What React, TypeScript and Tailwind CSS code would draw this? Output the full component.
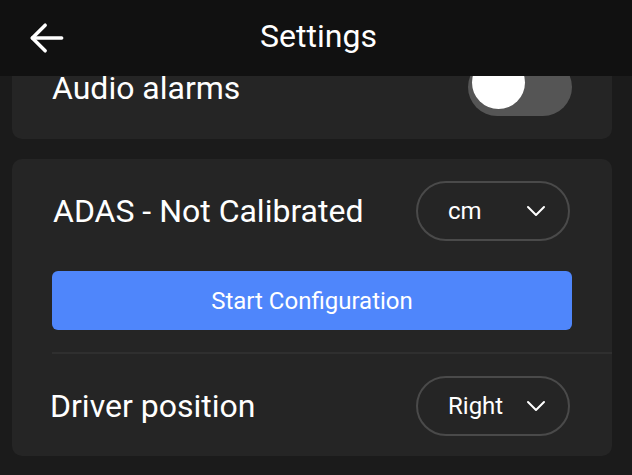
import React, { useState } from 'react';

function Chevron() {
  return (
    <svg width="24" height="24" viewBox="0 0 24 24" fill="none" stroke="white" strokeWidth="2" strokeLinecap="round" strokeLinejoin="round">
      <path d="M4 8l8 8 8-8" />
    </svg>
  );
}

function Select({ value }: { value: string }) {
  return (
    <button className="flex items-center justify-between w-[154px] h-[60px] rounded-full border-2 border-[#4a4a4a] pl-[30px] pr-[20px] text-[24px] text-white">
      <span>{value}</span>
      <Chevron />
    </button>
  );
}

export default function App() {
  const [audio, setAudio] = useState(false);

  return (
    <div className="flex flex-col w-[632px] h-[475px] overflow-hidden bg-[#1b1b1b] text-white" style={{ fontFamily: 'Roboto, "Noto Sans", sans-serif' }}>
      {/* Top bar */}
      <header className="relative z-10 flex items-center h-[76px] shrink-0 bg-[#111111] pl-[25px] pr-6">
        <svg width="44" height="44" viewBox="0 0 24 24" fill="none" stroke="white" strokeWidth="1.9" strokeLinecap="round" strokeLinejoin="round">
          <path d="M20 12H4" />
          <path d="M11 19l-7-7 7-7" />
        </svg>
        <h1 className="flex-1 text-center text-[32px] pr-[40px] pb-[4px]">Settings</h1>
      </header>

      <div className="flex flex-col gap-5 pl-3 pr-5">
        {/* Audio card, scrolled partly under the header */}
        <div className="-mt-[20px] bg-[#252525] rounded-[10px] pl-10 pr-10 pt-[2px] pb-[23px] flex items-center justify-between">
          <span className="text-[32px] pt-[2px]">Audio alarms</span>
          <button
            onClick={() => setAudio(!audio)}
            className="relative w-[104px] h-[58px] rounded-full bg-[#555555]"
          >
            <span className="absolute left-[4px] top-[-2px] w-[53px] h-[53px] rounded-full bg-white" />
          </button>
        </div>

        {/* ADAS card */}
        <div className="bg-[#252525] rounded-[10px] pt-[22px] pb-[20px]">
          <div className="flex items-center justify-between pl-10 pr-[42px]">
            <span className="text-[32px] pl-[1px]">ADAS - Not Calibrated</span>
            <Select value="cm" />
          </div>
          <div className="px-10 mt-[30px]">
            <button className="w-full h-[59px] rounded-[6px] bg-[#4f86fb] text-[24px]">Start Configuration</button>
          </div>
          <div className="ml-10 mt-[22px] h-[2px] bg-[#2f2f2f]" />
          <div className="flex items-center justify-between pl-[38px] pr-[42px] mt-[22px]">
            <span className="text-[32px]">Driver position</span>
            <Select value="Right" />
          </div>
        </div>
      </div>
    </div>
  );
}
